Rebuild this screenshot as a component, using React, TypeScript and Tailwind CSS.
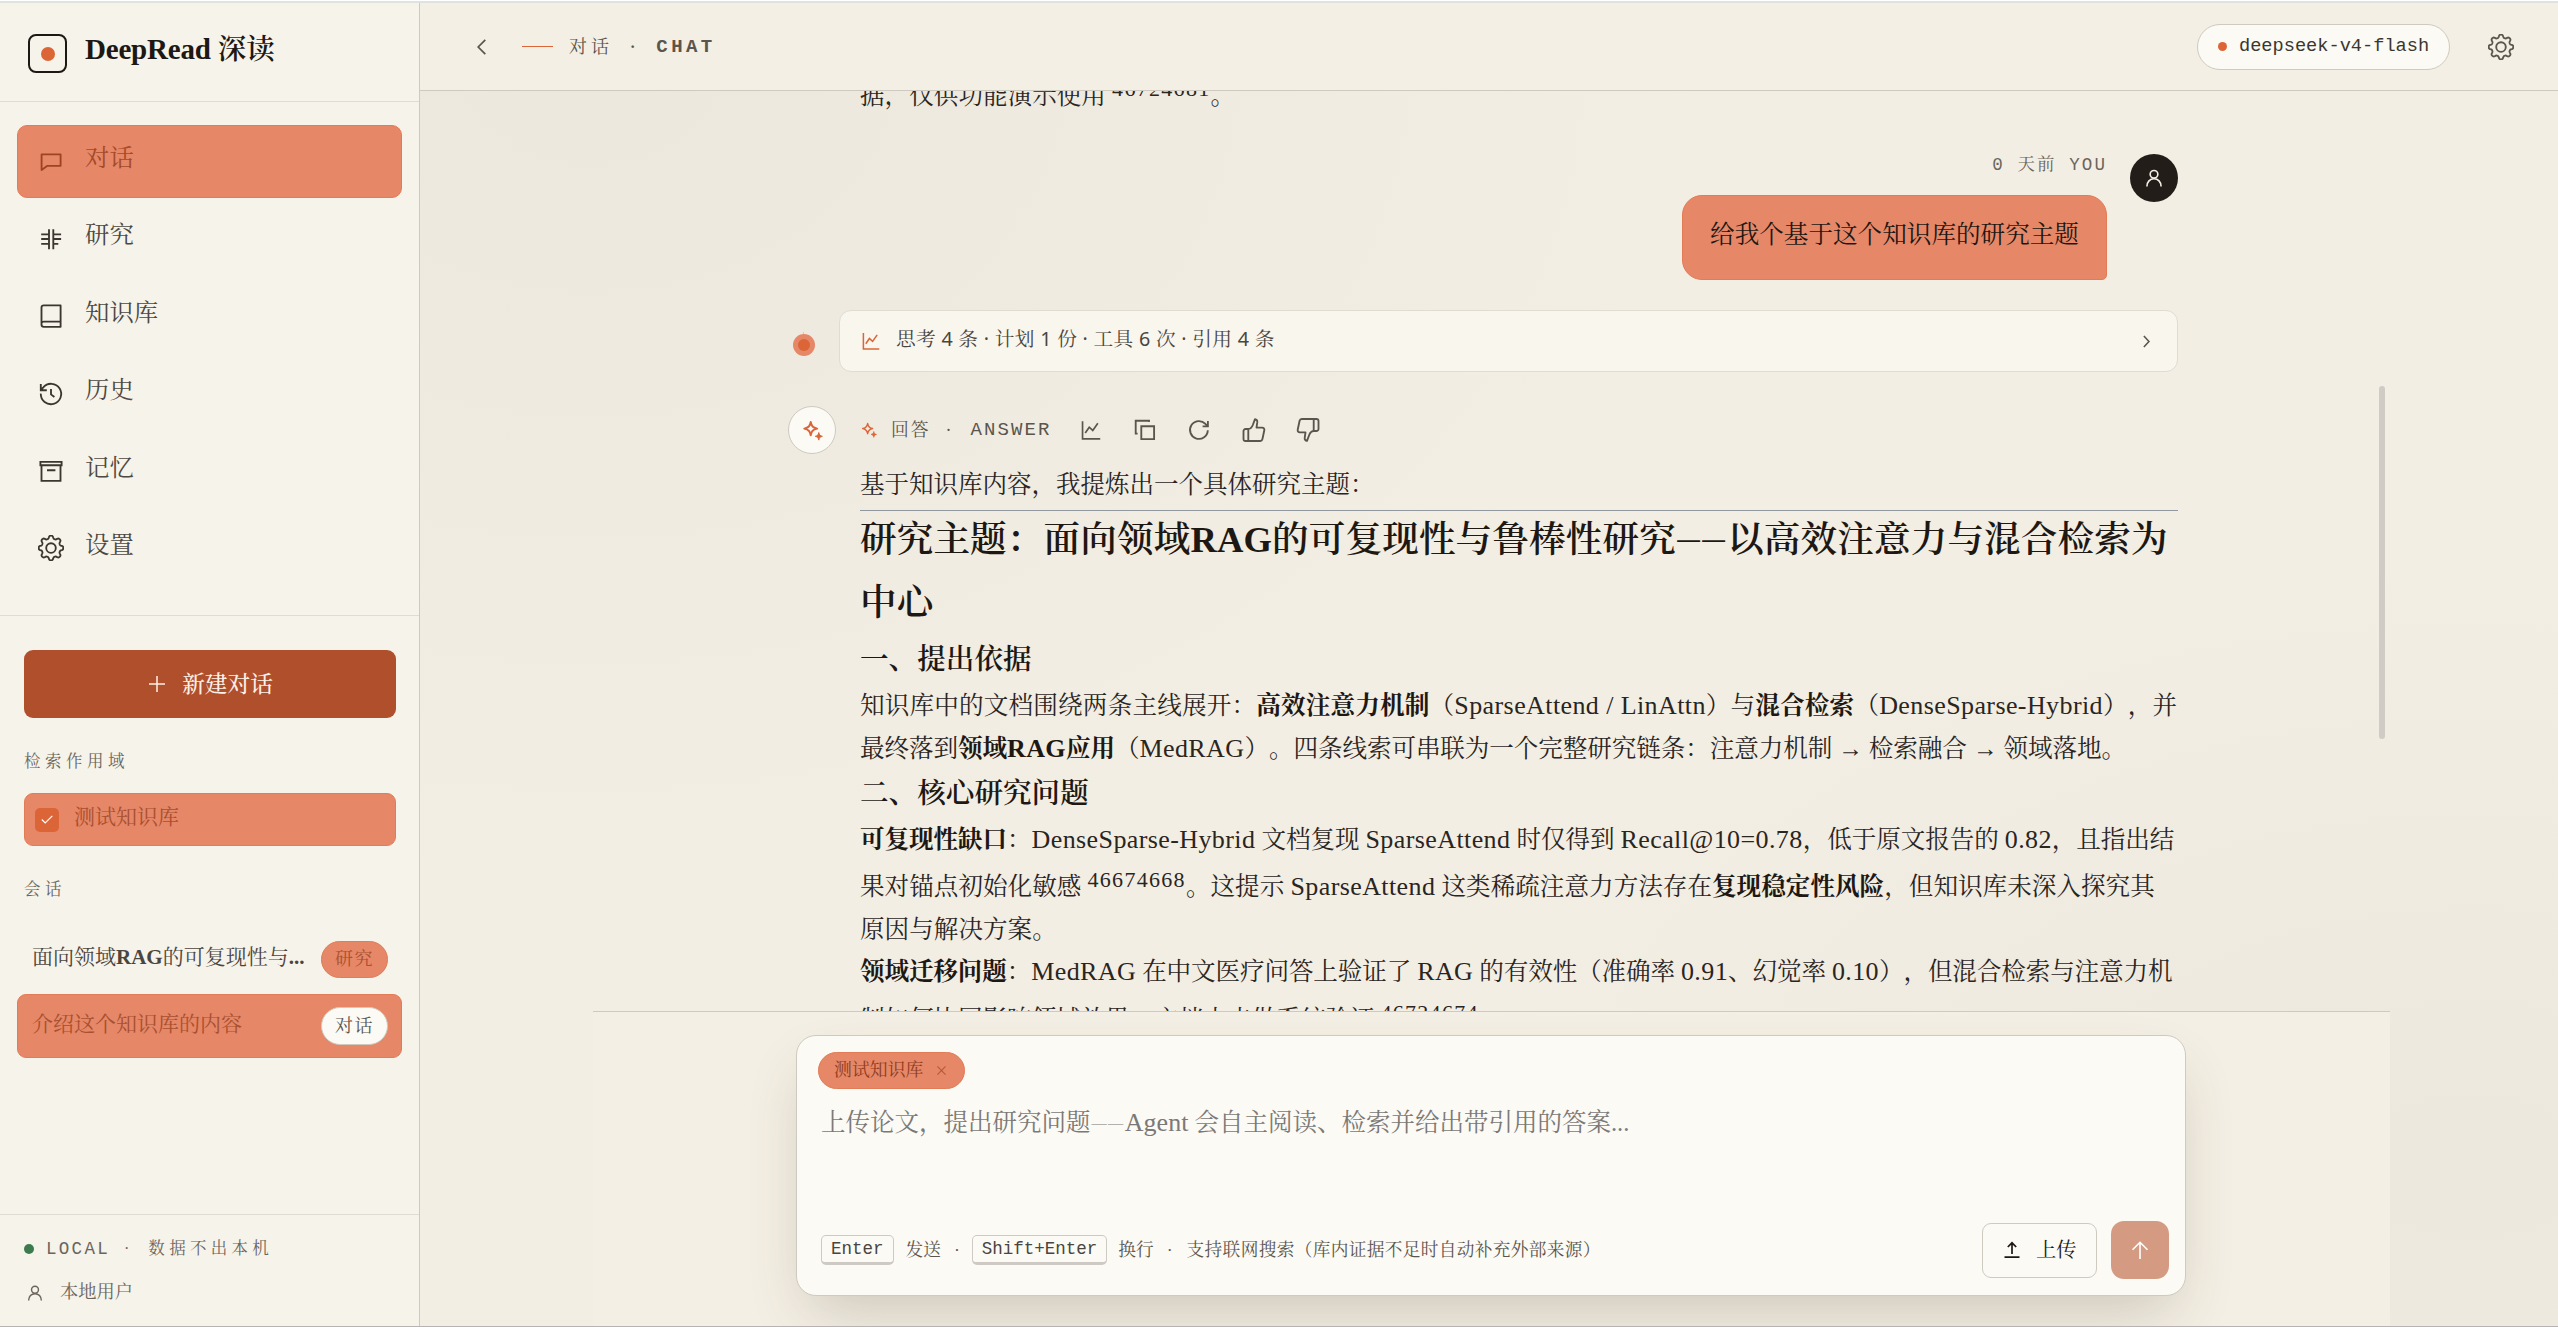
import React from 'react';

type IconProps = { className?: string };

function Svg({ className, children, sw = 1.85 }: IconProps & { children: React.ReactNode; sw?: number }) {
  return (
    <svg viewBox="0 0 26 26" fill="none" stroke="currentColor" strokeWidth={sw} className={className}>
      {children}
    </svg>
  );
}

// Eight-lobed gear outline, sampled around the circle.
const gearPath =
  Array.from({ length: 160 }, (_, i) => {
    const a = (i / 160) * Math.PI * 2;
    const r = 10.9 + 1.55 * Math.tanh(1.6 * Math.cos(8 * a));
    return `${i ? 'L' : 'M'}${(13 + r * Math.cos(a)).toFixed(2)} ${(13 + r * Math.sin(a)).toFixed(2)}`;
  }).join('') + 'Z';

const Gear = (p: IconProps) => (
  <Svg {...p}>
    <path d={gearPath} strokeLinejoin="round" />
    <circle cx="13" cy="13" r="4.8" />
  </Svg>
);
const Chat = (p: IconProps) => (
  <Svg {...p}>
    <path d="M3.6 5.4h19v11.4H9.4L3.6 21z" strokeLinejoin="round" />
  </Svg>
);
const Grid = (p: IconProps) => (
  <Svg {...p}>
    <path d="M11 3.2v20M15.3 3.2v20M3.2 8.3h8M15.3 8.3h7.8M3.2 13h8M15.3 13h7.8M3.2 17.9h8M15.3 17.9h5" />
  </Svg>
);
const Book = (p: IconProps) => (
  <Svg {...p}>
    <path d="M22.6 2.4H5.8c-1.2 0-2.3.8-2.3 2v17.4c0 1.2 1 2 2.3 2h16.8zM3.5 20c.3-.9 1-1.4 2.3-1.4h16.8" strokeLinejoin="round" />
  </Svg>
);
const History = (p: IconProps) => (
  <Svg {...p}>
    <path d="M2.8 12.6a10.2 10.2 0 1 0 2.5-6.3L2.8 9M2.8 3v6.2h6M13 8v5.4l3.4 2.6" />
  </Svg>
);
const Archive = (p: IconProps) => (
  <Svg {...p}>
    <path d="M2.4 3.8h21.2v3.4H2.4zM3.5 7.2h19v15.6h-19zM9 12.2h8.4" />
  </Svg>
);
const User = (p: IconProps) => (
  <Svg {...p} sw={2.1}>
    <circle cx="13" cy="8.2" r="5" />
    <path d="M3.8 24c0-6 4-10 9.2-10s9.2 4 9.2 10" />
  </Svg>
);
const Chart = ({ className, sw = 2.2 }: IconProps & { sw?: number }) => (
  <Svg className={className} sw={sw}>
    <path d="M2 1.5V24.5H25M5.5 17l5.2-7.6 4.6 4.2 6.6-9.4" />
  </Svg>
);
const Sparkles = (p: IconProps) => (
  <Svg {...p} sw={2.4}>
    <path d="M10.8 2.5c1 5.2 2.6 7 8 8.2-5.4 1.2-7 3-8 8.2-1-5.2-2.6-7-8-8.2 5.4-1.2 7-3 8-8.2z" strokeLinejoin="round" />
    <path d="M20.8 15.5c.6 3 1.5 4 4.4 4.7-2.9.7-3.8 1.7-4.4 4.7-.6-3-1.5-4-4.4-4.7 2.9-.7 3.8-1.7 4.4-4.7z" fill="currentColor" strokeWidth="1.2" />
  </Svg>
);
const Copy = (p: IconProps) => (
  <Svg {...p}>
    <path d="M9.3 9.2h12.8v12.9H9.3zM17 5V3.7H3.7V16.6H5.6" />
  </Svg>
);
const Refresh = (p: IconProps) => (
  <Svg {...p}>
    <path d="M21.8 13.2a8.9 8.9 0 1 1-2.4-6.3l2 2M21.9 4v5.3h-5.3" />
  </Svg>
);
const ThumbUp = (p: IconProps) => (
  <Svg {...p}>
    <path d="M7.3 12v12M7.3 12H4.6c-1.2 0-2.1.9-2.1 2.1v7.8c0 1.2.9 2.1 2.1 2.1h14.6c1.1 0 2-.7 2.2-1.8l1.9-9c.3-1.4-.7-2.6-2.1-2.6h-5.7l.8-5.4c.2-1.6-.7-2.9-2.3-3.1L11.8 8c-.8 2-2.4 4-4.5 4z" strokeLinejoin="round" />
  </Svg>
);

const navItems = [
  { label: '对话', Icon: Chat, active: true },
  { label: '研究', Icon: Grid },
  { label: '知识库', Icon: Book },
  { label: '历史', Icon: History },
  { label: '记忆', Icon: Archive },
  { label: '设置', Icon: Gear },
];

// Latin run inside Chinese body copy.
const En = ({ children }: { children: React.ReactNode }) => (
  <span className="text-[26px] leading-none tracking-[0.4px]">{children}</span>
);
const B = ({ children }: { children: React.ReactNode }) => (
  <strong className="font-bold text-[#1d1813]">{children}</strong>
);
const Cite = ({ children }: { children: React.ReactNode }) => (
  <span className="relative -top-[8px] text-[22px] leading-none tracking-[1.3px]">{children}</span>
);
const Dash = () => (
  <span className="relative -top-[0.2em] ml-[0.06em] text-[0.62em] leading-none tracking-[0.1em]">——</span>
);

function Row({ className = '', children }: { className?: string; children: React.ReactNode }) {
  return <div className={`h-[43px] whitespace-nowrap leading-[43px] ${className}`}>{children}</div>;
}

function Sidebar() {
  return (
    <aside className="flex h-full w-[420px] shrink-0 flex-col border-r border-[#cfcabf] bg-[#f6f3ea]">
      <div className="flex h-[99px] items-start border-b border-[#dfdcd3] pl-7 pt-[31px]">
        <div className="flex size-[39px] items-center justify-center rounded-[8px] border-2 border-[#1d1813]">
          <div className="size-[14px] rounded-full bg-[#dc6538]" />
        </div>
        <div className="ml-[18px] -mt-[4px] whitespace-nowrap text-[28.5px] font-bold leading-[39px] text-[#1d1813]">
          <span className="text-[29px] leading-none tracking-[-0.2px]">DeepRead</span> <span className="font-semibold">深读</span>
        </div>
      </div>

      <nav className="flex h-[514px] flex-col gap-[4.4px] border-b border-[#dfdcd3] px-[17px] pt-[23px]">
        {navItems.map(({ label, Icon, active }) => (
          <div
            key={label}
            className={
              active
                ? 'flex h-[73px] shrink-0 items-center rounded-[10px] border border-[#e27c56] bg-[#e68768] pl-[20px] text-[#9d4421]'
                : 'flex h-[73px] shrink-0 items-center rounded-[10px] border border-transparent pl-[20px] text-[#3b3630]'
            }
          >
            <Icon className="size-[26px]" />
            <span className="-mt-[7px] ml-[21px] text-[24.4px] leading-[34px] opacity-90">{label}</span>
          </div>
        ))}
      </nav>

      <div className="flex flex-1 flex-col pt-[34px]">
        <button className="ml-6 flex h-[68px] w-[372px] items-center justify-center rounded-[9px] bg-[#b04f2b] text-[#fbf1e8]">
          <svg viewBox="0 0 16 16" className="ml-[2px] size-4" stroke="currentColor" strokeWidth="1.5">
            <path d="M8 0v16M0 8h16" />
          </svg>
          <span className="ml-[17px] mt-[2px] text-[22.7px] font-medium leading-8">新建对话</span>
        </button>

        <div className="ml-6 mt-[32px] text-[16.5px] leading-6 tracking-[4.5px] text-[#6b655d]">检索作用域</div>
        <div className="ml-6 mt-[19px] flex h-[53px] w-[372px] items-center rounded-[9px] border border-[#e27c56] bg-[#e68768] pl-[10px]">
          <span className="flex size-6 items-center justify-center rounded-[5px] bg-[#dc6538]">
            <svg viewBox="0 0 12 9" className="h-[9px] w-3" fill="none" stroke="#fff" strokeWidth="1.2">
              <path d="M.8 4.5l3.4 3.5L11.3.8" />
            </svg>
          </span>
          <span className="-mt-[6px] ml-[15px] text-[21px] leading-7 text-[#a8502f]">测试知识库</span>
        </div>

        <div className="ml-6 mt-[32px] text-[16.5px] leading-6 tracking-[4.5px] text-[#6b655d]">会话</div>

        <div className="ml-[17px] mt-[25px] flex h-[64px] w-[385px] items-center pl-[15px]">
          <span className="-mt-[5px] w-[275px] whitespace-nowrap text-[21px] leading-7 text-[#4a453e]">
            面向领域<span className="font-bold">RAG</span>的可复现性与<span className="font-bold">...</span>
          </span>
          <span className="ml-[14px] flex h-[37px] w-[67px] items-center justify-center rounded-full border border-[#e27c56] bg-[#e68768] text-[18px] tracking-[1.5px] text-[#a8502f]">
            研究
          </span>
        </div>
        <div className="ml-[17px] mt-[3px] flex h-[64px] w-[385px] items-center rounded-[9px] border border-[#e27c56] bg-[#e68768] pl-[14px]">
          <span className="-mt-[5px] w-[275px] text-[21px] leading-7 text-[#a8502f]">介绍这个知识库的内容</span>
          <span className="ml-[14px] flex h-[38px] w-[67px] items-center justify-center rounded-full border border-[#cfcabf] bg-[#fcfaf5] text-[18px] tracking-[1.5px] text-[#5a554d]">
            对话
          </span>
        </div>
      </div>

      <div className="h-[112px] border-t border-[#dfdcd3] pl-6 text-[#6b655d]">
        <div className="mt-[22px] flex h-6 items-center whitespace-nowrap">
          <span className="size-[10px] rounded-full bg-[#3d7b4f]" />
          <span className="ml-[12px] font-['Liberation_Mono','Noto_Sans_CJK_SC',monospace] text-[17.5px] tracking-[2.3px]">LOCAL</span>
          <span className="ml-[14px]">·</span>
          <span className="ml-[19px] text-[16.5px] tracking-[4.3px]">数据不出本机</span>
        </div>
        <div className="mt-[20px] flex h-6 items-center">
          <User className="ml-[2px] size-[18px]" />
          <span className="ml-[16px] text-[18.3px]">本地用户</span>
        </div>
      </div>
    </aside>
  );
}

function Topbar() {
  return (
    <header className="flex h-[88px] shrink-0 items-center border-b border-[#cfcabf] bg-[#f4efe4] text-[#5a554d]">
      <svg viewBox="0 0 9 16" className="ml-[57px] h-4 w-[9px]" fill="none" stroke="currentColor" strokeWidth="1.7">
        <path d="M8.3.8L1.2 8l7.1 7.2" />
      </svg>
      <span className="ml-[36px] h-px w-[31px] bg-[#dc6538]" />
      <span className="ml-[16px] mt-px text-[18px] tracking-[4px]">对话</span>
      <span className="ml-[17px] font-bold">·</span>
      <span className="ml-[21px] mt-px font-['Liberation_Mono',monospace] text-[19px] font-bold tracking-[3.4px]">CHAT</span>
      <div className="ml-auto flex h-[46px] w-[253px] items-center rounded-full border border-[#cfcabf] bg-[#fcfaf5] pl-[20px]">
        <span className="size-[9px] rounded-full bg-[#dc6538]" />
        <span className="ml-[12px] mt-px font-['Liberation_Mono',monospace] text-[18.65px] text-[#3b3630]">deepseek-v4-flash</span>
      </div>
      <Gear className="ml-[38px] mr-[44px] size-[26px]" />
    </header>
  );
}

function Conversation() {
  return (
    <section className="relative h-[920px] shrink-0 overflow-hidden text-[24.6px] text-[#2a251f]">
      <div className="ml-[368px] w-[1390px]">
        <Row className="-mt-[17.5px] ml-[72px]">
          据，仅供功能演示使用 <Cite>46724681</Cite>。
        </Row>

        <div className="mt-[37.5px] flex items-start justify-end">
          <div className="flex flex-col items-end">
            <div className="mt-px flex h-5 items-center whitespace-pre font-['Liberation_Mono','Noto_Serif_CJK_SC','Noto_Sans_CJK_SC',monospace] text-[17.5px] tracking-[2.1px] text-[#6b655d]">
              0 天前 YOU
            </div>
            <div className="mt-[20px] flex h-[85px] w-[425px] items-center justify-center rounded-[20px] rounded-br-[5px] border border-[#e27c56] bg-[#e68768] pb-[5px] text-[24.6px] text-[#1d1813]">
              给我个基于这个知识库的研究主题
            </div>
          </div>
          <div className="ml-[23px] flex size-12 items-center justify-center rounded-full bg-[#221d18] text-[#f4efe4]">
            <User className="size-5" />
          </div>
        </div>

        <div className="mt-[30px] flex h-[62px]">
          <div className="ml-[4.5px] flex w-[22px] flex-col items-center pt-[22px]">
            <span className="h-[2px] w-px bg-[#cfcabf]" />
            <span className="flex size-[22px] shrink-0 items-center justify-center rounded-full bg-[#e68768]">
              <span className="size-3 rounded-full bg-[#dc6538]" />
            </span>
          </div>
          <div className="ml-auto flex w-[1339px] items-center rounded-[12px] border border-[#dfdcd3] bg-[#f9f6ee]">
            <Chart className="ml-[22px] size-[18px] text-[#dc6538]" />
            <span className="-mt-[4px] ml-[16px] whitespace-nowrap font-['Noto_Sans','Noto_Serif_CJK_SC','Noto_Sans_CJK_SC',serif] text-[19.7px] tracking-[0.3px] text-[#4a453e]">
              思考 4 条 · 计划 1 份 · 工具 6 次 · 引用 4 条
            </span>
            <svg viewBox="0 0 8 14" className="ml-auto mr-[27px] h-[13px] w-[7px]" fill="none" stroke="#5a554d" strokeWidth="1.8">
              <path d="M1 .8L6.8 7 1 13.2" />
            </svg>
          </div>
        </div>

        <div className="mt-[34px] flex h-12 items-center text-[#5a554d]">
          <div className="flex size-12 items-center justify-center rounded-full border border-[#cfcabf] bg-[#fcfaf5] text-[#dc6538]">
            <Sparkles className="size-[21px]" />
          </div>
          <Sparkles className="ml-[25px] size-4 text-[#dc6538]" />
          <span className="ml-[14px] text-[17.8px] tracking-[2px]">回答</span>
          <span className="ml-[15px] text-[18px]">·</span>
          <span className="ml-[19px] w-[82px] font-['Liberation_Mono',monospace] text-[19px] tracking-[2.1px]">ANSWER</span>
          <Chart sw={2.2} className="ml-[28px] size-[20px]" />
          <Copy className="ml-[31px] size-[26px]" />
          <Refresh className="ml-[28px] size-[26px]" />
          <ThumbUp className="ml-[29px] size-[26px]" />
          <ThumbUp className="ml-[28px] size-[26px] rotate-180" />
        </div>

        <div className="ml-[72px] [text-spacing-trim:space-all]">
          <Row className="mt-[8.5px] text-[24.5px]">基于知识库内容，我提炼出一个具体研究主题：</Row>
          <div className="mt-[4.5px] h-px bg-[#9298a0]" />
          <h1 className="-mt-[2px] h-[125px] whitespace-nowrap text-[36.6px] font-semibold leading-[62.5px] tracking-[0.13px] text-[#1d1813]">
            <span className="block h-[62.5px]">
              研究主题：面向领域<span className="font-bold">RAG</span>的可复现性与鲁棒性研究<Dash />以高效注意力与混合检索为
            </span>
            <span className="block h-[62.5px]">中心</span>
          </h1>
          <h3 className="h-[49.5px] text-[28.6px] font-semibold leading-[51px] text-[#1d1813]">一、提出依据</h3>
          <Row className="tracking-[0.17px]">
            知识库中的文档围绕两条主线展开：<B>高效注意力机制</B>（<En>SparseAttend / LinAttn</En>）与<B>混合检索</B>（<En>DenseSparse-Hybrid</En>），并
          </Row>
          <Row className="tracking-[-0.1px]">
            最终落到<B>领域<En>RAG</En>应用</B>（<En>MedRAG</En>）。四条线索可串联为一个完整研究链条：注意力机制 → 检索融合 → 领域落地。
          </Row>
          <h3 className="h-[48px] text-[28.6px] font-semibold leading-[48px] text-[#1d1813]">二、核心研究问题</h3>
          <Row className="tracking-[-0.09px]">
            <B>可复现性缺口</B>：<En>DenseSparse-Hybrid</En> 文档复现 <En>SparseAttend</En> 时仅得到 <En>Recall@10=0.78</En>，低于原文报告的 <En>0.82</En>，且指出结
          </Row>
          <Row className="mt-[4px]">
            果对锚点初始化敏感 <Cite>46674668</Cite>。这提示 <En>SparseAttend</En> 这类稀疏注意力方法存在<B>复现稳定性风险</B>，但知识库未深入探究其
          </Row>
          <Row>原因与解决方案。</Row>
          <Row className="-mt-px tracking-[-0.14px]">
            <B>领域迁移问题</B>：<En>MedRAG</En> 在中文医疗问答上验证了 <En>RAG</En> 的有效性（准确率 <En>0.91</En>、幻觉率 <En>0.10</En>），但混合检索与注意力机
          </Row>
          <Row className="mt-[5px] tracking-[-0.1px]">
            制如何协同影响领域效果，文档中未做系统验证 <Cite>46724674</Cite>。
          </Row>
        </div>
      </div>
      <div className="absolute left-[1959px] top-[295px] h-[353px] w-[6px] rounded-full bg-[#d0cbc4]" />
    </section>
  );
}

function Kbd({ children }: { children: React.ReactNode }) {
  return (
    <kbd className="flex h-[30px] items-center rounded-[5px] border border-b-[3px] border-[#cfc9c3] px-[9px] font-['Liberation_Mono',monospace] text-[17.5px] text-[#4a453e]">
      {children}
    </kbd>
  );
}

function Composer() {
  return (
    <footer className="ml-[173px] h-[315px] w-[1797px] overflow-hidden border-t border-[#cfcabf] bg-[#f4efe4]">
      <div className="ml-[203px] mt-[23px] flex h-[261px] w-[1390px] flex-col rounded-[20px] border border-[#cfcabf] bg-[#fcfaf5] pl-[21px] pt-[16px] shadow-[0_26px_60px_-14px_rgba(70,60,40,0.24)]">
        <div className="flex h-[37px] w-[147px] items-center rounded-full border border-[#e27c56] bg-[#e68768] pl-[15px] text-[17.9px] text-[#8f3d1d]">
          <span>测试知识库</span>
          <svg viewBox="0 0 10 10" className="ml-[14px] size-[9px] opacity-60" stroke="currentColor" strokeWidth="1.2">
            <path d="M.5.5l9 9M9.5.5l-9 9" />
          </svg>
        </div>
        <div className="ml-[3px] mt-[14px] h-10 whitespace-nowrap text-[24.5px] leading-10 text-[#7b7975]">
          上传论文，提出研究问题<Dash /><span className="text-[26px] leading-none">Agent</span> 会自主阅读、检索并给出带引用的答案...
        </div>
        <div className="mt-[78px] flex h-[58px] items-center whitespace-nowrap text-[17.7px] text-[#5a554d] [text-spacing-trim:space-all]">
          <div className="ml-[3px] flex items-center">
            <Kbd>Enter</Kbd>
            <span className="ml-[12px]">发送</span>
            <span className="ml-[13px]">·</span>
            <span className="ml-[12px]"><Kbd>Shift+Enter</Kbd></span>
            <span className="ml-[11px]">换行</span>
            <span className="ml-[13px]">·</span>
            <span className="ml-[14px] tracking-[0.32px]">支持联网搜索（库内证据不足时自动补充外部来源）</span>
          </div>
          <button className="ml-auto flex h-[55px] w-[115px] items-center rounded-[9px] border border-[#cfcabf] pl-[21px] text-[20.3px] text-[#1d1813]">
            <svg viewBox="0 0 16 18" className="h-[18px] w-4" fill="none" stroke="currentColor" strokeWidth="1.7">
              <path d="M8 13V2M3.8 6L8 1.8 12.2 6M.5 16.2h15" />
            </svg>
            <span className="ml-[16px]">上传</span>
          </button>
          <button className="ml-[14px] mr-[16px] flex size-[58px] items-center justify-center rounded-[13px] bg-[#d49b82] text-white">
            <svg viewBox="0 0 18 18" className="size-[18px]" fill="none" stroke="currentColor" strokeWidth="1.6">
              <path d="M9 18V1.5M1.5 8.8L9 1.3l7.5 7.5" />
            </svg>
          </button>
        </div>
      </div>
    </footer>
  );
}

export default function App() {
  return (
    <div className="flex h-[1327px] w-[2558px] flex-col overflow-hidden bg-white font-['Liberation_Serif','Noto_Serif_CJK_SC','Noto_Sans_CJK_SC',serif]">
      <div className="mt-px h-[2px] shrink-0 bg-[#dfe3df]" />
      <div className="flex h-[1323px] shrink-0">
        <Sidebar />
        <main className="flex flex-1 flex-col bg-[#f3eee3] bg-[radial-gradient(ellipse_1100px_800px_at_8%_5%,rgba(234,230,220,0.8),rgba(234,230,220,0)),radial-gradient(ellipse_1000px_600px_at_96%_88%,rgba(234,230,219,0.8),rgba(234,230,219,0))]">
          <Topbar />
          <Conversation />
          <Composer />
        </main>
      </div>
      <div className="h-px shrink-0 bg-[#b8b2b0]" />
    </div>
  );
}
